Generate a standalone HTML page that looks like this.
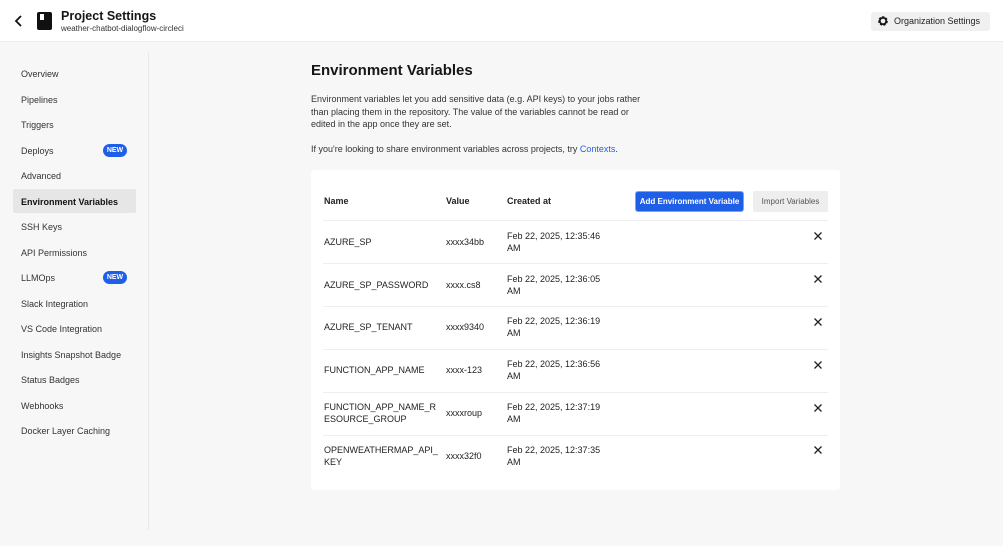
<!DOCTYPE html><html><head><style>
*{box-sizing:border-box;margin:0;padding:0}
body{width:1003px;height:546px;overflow:hidden;background:#f7f7f7;font-family:"Liberation Sans",sans-serif;color:#161616;position:relative}
.hdr{position:absolute;left:0;top:0;width:1003px;height:42px;background:#fff;border-bottom:1px solid #ececec}
.side a{position:absolute;left:21px;font-size:9px;color:#333}
.div{position:absolute;left:148px;top:52px;width:1px;height:478px;background:#e8e8e8}
.card{position:absolute;left:311px;top:170px;width:529px;height:320px;background:#fff;border-radius:3px}
.c{position:absolute;font-size:9px;line-height:12px;color:#222}
.line{position:absolute;left:12px;width:505px;height:1px;background:#eeeeee}
.new{position:absolute;left:103px;width:24px;height:13px;border-radius:7px;background:#1f5fe8;color:#fff;font-size:7px;font-weight:bold;text-align:center;line-height:13px}
.x{position:absolute;left:503px}
</style></head><body>
<div class="hdr">
<svg style="position:absolute;left:14px;top:15px" width="10" height="12"><path d="M7 1L2 6l5 5" stroke="#111" stroke-width="1.8" fill="none"/></svg>
<div style="position:absolute;left:37px;top:12px;width:15px;height:18px;background:#111;border-radius:2px"><div style="position:absolute;left:3px;top:2px;width:4px;height:6px;background:#fff"></div></div>
<div style="position:absolute;left:61px;top:9px;font-size:12.5px;font-weight:bold">Project Settings</div>
<div style="position:absolute;left:61px;top:24px;font-size:8px;color:#333">weather-chatbot-dialogflow-circleci</div>
<div style="position:absolute;left:871px;top:12px;width:119px;height:19px;background:#f0f0f0;border-radius:3px;font-size:9px;line-height:19px;padding-left:23px;color:#222">Organization Settings</div>
<svg style="position:absolute;left:877px;top:15px" width="12" height="12" viewBox="0 0 12 12"><circle cx="6" cy="6" r="3.6" fill="none" stroke="#111" stroke-width="2.4" stroke-dasharray="2 1.2"/><circle cx="6" cy="6" r="3.2" fill="none" stroke="#111" stroke-width="1.6"/></svg>
</div>
<div class="side">
<a style="top:69px">Overview</a><a style="top:95px">Pipelines</a><a style="top:120px">Triggers</a><a style="top:146px">Deploys</a><div class="new" style="top:144px">NEW</div>
<a style="top:171px">Advanced</a>
<div style="position:absolute;left:13px;top:189px;width:123px;height:24px;background:#e6e6e6;border-radius:2px"></div>
<a style="top:197px;font-weight:bold;color:#111">Environment Variables</a>
<a style="top:222px">SSH Keys</a><a style="top:248px">API Permissions</a><a style="top:273px">LLMOps</a><div class="new" style="top:271px">NEW</div>
<a style="top:299px">Slack Integration</a><a style="top:324px">VS Code Integration</a><a style="top:350px">Insights Snapshot Badge</a><a style="top:375px">Status Badges</a><a style="top:401px">Webhooks</a><a style="top:426px">Docker Layer Caching</a>
</div>
<div class="div"></div>
<div style="position:absolute;left:311px;top:62px;font-size:15px;font-weight:bold">Environment Variables</div>
<div style="position:absolute;left:311px;top:93px;width:340px;font-size:9px;line-height:12.5px;color:#333">Environment variables let you add sensitive data (e.g. API keys) to your jobs rather than placing them in the repository. The value of the variables cannot be read or edited in the app once they are set.</div>
<div style="position:absolute;left:311px;top:144px;font-size:9px;color:#333">If you're looking to share environment variables across projects, try <span style="color:#1f5fe8">Contexts</span>.</div>
<div class="card">
<div class="c" style="left:13px;top:25px;font-weight:bold">Name</div><div class="c" style="left:135px;top:25px;font-weight:bold">Value</div><div class="c" style="left:196px;top:25px;font-weight:bold">Created at</div>
<div style="position:absolute;left:324px;top:21px;width:109px;height:21px;background:#1f5fe8;border:1px solid #7aa3f5;border-radius:3px;color:#fff;font-size:8px;font-weight:bold;text-align:center;line-height:19px">Add Environment Variable</div>
<div style="position:absolute;left:442px;top:21px;width:75px;height:21px;background:#eee;border-radius:2px;color:#555;font-size:8px;text-align:center;line-height:21px">Import Variables</div>
<div class="line" style="top:50px"></div>
<div class="c" style="left:13px;top:66px">AZURE_SP</div><div class="c" style="left:135px;top:66px">xxxx34bb</div><div class="c" style="left:196px;top:60px">Feb 22, 2025, 12:35:46<br>AM</div><svg class="x" style="top:62px" width="8" height="8"><path d="M.5 .5l7 7M7.5 .5l-7 7" stroke="#222" stroke-width="1.3"/></svg>
<div class="line" style="top:93px"></div>
<div class="c" style="left:13px;top:109px">AZURE_SP_PASSWORD</div><div class="c" style="left:135px;top:109px">xxxx.cs8</div><div class="c" style="left:196px;top:103px">Feb 22, 2025, 12:36:05<br>AM</div><svg class="x" style="top:105px" width="8" height="8"><path d="M.5 .5l7 7M7.5 .5l-7 7" stroke="#222" stroke-width="1.3"/></svg>
<div class="line" style="top:136px"></div>
<div class="c" style="left:13px;top:151px">AZURE_SP_TENANT</div><div class="c" style="left:135px;top:151px">xxxx9340</div><div class="c" style="left:196px;top:145px">Feb 22, 2025, 12:36:19<br>AM</div><svg class="x" style="top:148px" width="8" height="8"><path d="M.5 .5l7 7M7.5 .5l-7 7" stroke="#222" stroke-width="1.3"/></svg>
<div class="line" style="top:179px"></div>
<div class="c" style="left:13px;top:194px">FUNCTION_APP_NAME</div><div class="c" style="left:135px;top:194px">xxxx-123</div><div class="c" style="left:196px;top:188px">Feb 22, 2025, 12:36:56<br>AM</div><svg class="x" style="top:191px" width="8" height="8"><path d="M.5 .5l7 7M7.5 .5l-7 7" stroke="#222" stroke-width="1.3"/></svg>
<div class="line" style="top:222px"></div>
<div class="c" style="left:13px;top:231px">FUNCTION_APP_NAME_R<br>ESOURCE_GROUP</div><div class="c" style="left:135px;top:237px">xxxxroup</div><div class="c" style="left:196px;top:231px">Feb 22, 2025, 12:37:19<br>AM</div><svg class="x" style="top:234px" width="8" height="8"><path d="M.5 .5l7 7M7.5 .5l-7 7" stroke="#222" stroke-width="1.3"/></svg>
<div class="line" style="top:265px"></div>
<div class="c" style="left:13px;top:274px">OPENWEATHERMAP_API_<br>KEY</div><div class="c" style="left:135px;top:280px">xxxx32f0</div><div class="c" style="left:196px;top:274px">Feb 22, 2025, 12:37:35<br>AM</div><svg class="x" style="top:276px" width="8" height="8"><path d="M.5 .5l7 7M7.5 .5l-7 7" stroke="#222" stroke-width="1.3"/></svg>
</div>
</body></html>
